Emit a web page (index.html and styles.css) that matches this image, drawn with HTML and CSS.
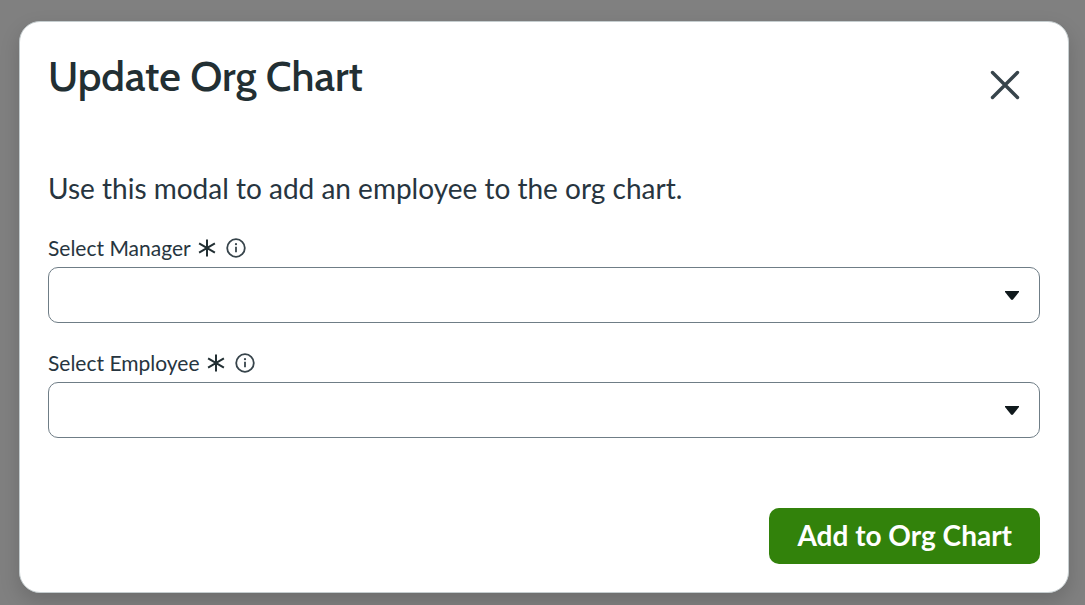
FILE: index.html
```html
<!DOCTYPE html>
<html lang="en">
<head>
<meta charset="utf-8">
<meta name="viewport" content="width=device-width, initial-scale=1">
<title>Update Org Chart</title>
<link rel="stylesheet" href="styles.css">
</head>
<body>
<main class="modal" role="dialog" aria-modal="true" aria-labelledby="modal-title">
  <header class="modal-header">
    <h1 class="modal-title" id="modal-title">Update Org Chart</h1>
    <button class="close-button" type="button" aria-label="Close">
      <svg class="close-icon" viewBox="0 0 30 30" aria-hidden="true"><path d="M2.5 2.5 27.5 27.5M27.5 2.5 2.5 27.5"/></svg>
    </button>
  </header>
  <form class="modal-form">
    <p class="intro">Use this modal to add an employee to the org chart.</p>
    <div class="field">
      <div class="label-row">
        <label class="label" for="manager">Select Manager</label>
        <svg class="required-icon" viewBox="0 0 18 20" aria-hidden="true"><path d="M9 1.5v17M1.1 5.3l15.8 9.4M16.9 5.3l-15.8 9.4"/></svg>
        <svg class="info-icon" viewBox="0 0 20 20" aria-hidden="true"><circle cx="10" cy="10" r="8.8"/><path d="M10 8.8v5.4"/><circle class="info-dot" cx="10" cy="6.2" r="1.1"/></svg>
      </div>
      <div class="select-wrap">
        <select class="select" id="manager" required><option value=""></option></select>
        <svg class="caret" viewBox="0 0 14 9" aria-hidden="true"><path d="M0 0h14v1L8 8.5Q7 9.4 6 8.5L0 1Z"/></svg>
      </div>
    </div>
    <div class="field">
      <div class="label-row">
        <label class="label" for="employee">Select Employee</label>
        <svg class="required-icon" viewBox="0 0 18 20" aria-hidden="true"><path d="M9 1.5v17M1.1 5.3l15.8 9.4M16.9 5.3l-15.8 9.4"/></svg>
        <svg class="info-icon" viewBox="0 0 20 20" aria-hidden="true"><circle cx="10" cy="10" r="8.8"/><path d="M10 8.8v5.4"/><circle class="info-dot" cx="10" cy="6.2" r="1.1"/></svg>
      </div>
      <div class="select-wrap">
        <select class="select" id="employee" required><option value=""></option></select>
        <svg class="caret" viewBox="0 0 14 9" aria-hidden="true"><path d="M0 0h14v1L8 8.5Q7 9.4 6 8.5L0 1Z"/></svg>
      </div>
    </div>
    <footer class="actions">
      <button class="submit-button" type="submit">Add to Org Chart</button>
    </footer>
  </form>
</main>
</body>
</html>
```

FILE: styles.css
```css
* {
  box-sizing: border-box;
}

body {
  margin: 0;
  padding: 21px 16px 12px 19px;
  background: #808080;
  color: #273540;
  font-family: Lato, "Open Sans", sans-serif;
}

.modal {
  padding: 28px;
  background: #fff;
  border: 1px solid #c5cdcf;
  border-radius: 21px;
  box-shadow: 0 8px 20px rgba(0, 0, 0, 0.16);
}

.modal-header {
  display: flex;
  justify-content: space-between;
  align-items: flex-start;
  margin-bottom: 48px;
}

.modal-title {
  margin: 0;
  color: #222f33;
  font-family: Cabin, Lato, sans-serif;
  font-size: 42px;
  font-weight: 500;
  line-height: 52px;
}

.close-button {
  display: grid;
  place-items: center;
  width: 70px;
  height: 70px;
  padding: 0;
  border: 0;
  background: none;
  cursor: pointer;
}

.close-icon {
  width: 30px;
  height: 30px;
  fill: none;
  stroke: #37444b;
  stroke-width: 3.4;
  stroke-linecap: round;
}

.intro {
  margin: 0 0 24px;
  font-size: 28px;
  line-height: 40px;
}

.field {
  margin-bottom: 24px;
}

.label-row {
  display: flex;
  align-items: center;
  gap: 7px;
  margin-bottom: 4px;
}

.label {
  font-size: 21px;
  line-height: 31px;
}

.required-icon {
  width: 18px;
  height: 20px;
  fill: none;
  stroke: #222f33;
  stroke-width: 2;
}

.info-icon {
  width: 20px;
  height: 20px;
  margin-left: 3px;
  fill: none;
  stroke: #37444b;
  stroke-width: 1.8;
}

.info-dot {
  fill: #37444b;
  stroke: none;
}

.select-wrap {
  display: grid;
  align-items: center;
}

.select {
  grid-area: 1 / 1;
  width: 100%;
  height: 56px;
  padding: 0 56px 0 20px;
  border: 1px solid #6f7d86;
  border-radius: 10px;
  background: #fff;
  color: inherit;
  font: inherit;
  font-size: 24px;
  appearance: none;
}

.caret {
  grid-area: 1 / 1;
  justify-self: end;
  width: 14px;
  height: 9px;
  margin-right: 21px;
  fill: #10191c;
  pointer-events: none;
}

.actions {
  display: flex;
  justify-content: flex-end;
  margin-top: 70px;
}

.submit-button {
  height: 56px;
  padding: 0 28px 2px;
  border: 0;
  border-radius: 10px;
  background: #32820b;
  color: #fff;
  font-family: inherit;
  font-size: 28px;
  font-weight: 700;
  cursor: pointer;
}
```
